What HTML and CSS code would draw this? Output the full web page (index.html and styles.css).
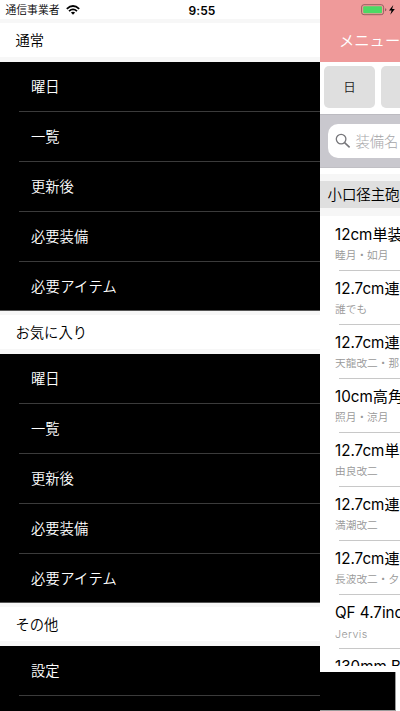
FILE: index.html
```html
<!DOCTYPE html>
<html lang="ja">
<head>
<meta charset="utf-8">
<title>メニュー</title>
<link rel="stylesheet" href="styles.css">
</head>
<body>
<div class="screen">
  <nav class="drawer">
    <div class="status">
      <span class="carrier">通信事業者</span>
      <svg class="wifi" width="14" height="10" viewBox="0 0 14 10"><g fill="none" stroke="#000" stroke-width="1.8"><path d="M.8 3.8Q7-1.7 13.2 3.8"/><path d="M3 6.1Q7 2.7 11 6.1"/></g><path d="M4.9 7.6Q7 6 9.1 7.6L7 9.8Z"/></svg>
      <span class="clock">9:55</span>
    </div>
    <h2 class="section first">通常</h2>
    <ul class="group">
      <li><span>曜日</span></li><li><span>一覧</span></li><li><span>更新後</span></li><li><span>必要装備</span></li><li><span class="wide">必要アイテム</span></li>
    </ul>
    <h2 class="section">お気に入り</h2>
    <ul class="group">
      <li><span>曜日</span></li><li><span>一覧</span></li><li><span>更新後</span></li><li><span>必要装備</span></li><li><span class="wide">必要アイテム</span></li>
    </ul>
    <h2 class="section">その他</h2>
    <ul class="group last"><li><span>設定</span></li><li></li></ul>
  </nav>
  <main class="content">
    <header class="topbar">
      <div class="power">
        <svg width="35" height="14" viewBox="0 0 35 14"><rect x=".6" y="1.7" width="22" height="10" rx="2.4" fill="none" stroke="#985f61" stroke-width="1"/><rect x="2.2" y="3.2" width="18.8" height="7" rx="1" fill="#4cd964"/><path d="M24 5.2q1.4.4 1.4 1.5T24 8.2z" fill="#985f61"/><path d="M32.3 1.9L28 7.6h2.6l-1.3 4.2 4.5-5.8h-2.7z"/></svg>
      </div>
      <div class="title">メニュー</div>
    </header>
    <div class="days"><div class="day">日</div><div class="day"></div></div>
    <div class="searchbar">
      <div class="field">
        <svg width="16" height="16" viewBox="0 0 16 16" fill="none" stroke="#77777b" stroke-width="1.3"><circle cx="6.1" cy="6.1" r="4.8"/><path d="M9.6 9.6L14.6 14.4" stroke-width="1.6"/></svg>
        <span>装備名</span>
      </div>
    </div>
    <div class="category"><div>小口径主砲</div></div>
    <div class="list">
      <div class="item"><b>12cm単装</b><small>睦月・如月</small></div>
      <div class="item"><b>12.7cm連装</b><small>誰でも</small></div>
      <div class="item"><b>12.7cm連装</b><small>天龍改二・那</small></div>
      <div class="item"><b>10cm高角</b><small>照月・涼月</small></div>
      <div class="item"><b>12.7cm単装</b><small>由良改二</small></div>
      <div class="item"><b>12.7cm連装</b><small>満潮改二</small></div>
      <div class="item"><b>12.7cm連装</b><small>長波改二・夕</small></div>
      <div class="item"><b>QF 4.7inch</b><small class="latin">Jervis</small></div>
      <div class="item"><b>130mm B</b></div>
    </div>
    <div class="banner"><div></div></div>
  </main>
</div>
</body>
</html>
```
FILE: styles.css
```css
* { box-sizing: border-box; margin: 0; padding: 0; }
body { font-family: Inter, "Noto Sans CJK JP", sans-serif; overflow: hidden; background: #fff; color: #000; }
.screen { display: grid; grid-template-columns: 320px 80px; width: 400px; height: 711px; overflow: hidden; }
.drawer { height: 711px; overflow: hidden; background: #000; }
.status { display: flex; align-items: center; height: 19px; padding-left: 5.5px; background: #fff; }
.carrier { width: 54.5px; padding-top: 2px; font-size: 10.8px; font-weight: 350; line-height: 19px; white-space: nowrap; }
.wifi { margin-left: 6px; }
.clock { margin: 1px 0 0 108.5px; font-size: 12px; font-weight: 600; line-height: 19px; letter-spacing: .1px; }
.section { height: 43px; padding-left: 15.5px; background: #fff; border-top: 4px solid #f7f7f7; border-bottom: 5px solid #f7f7f7; font-size: 14.3px; font-weight: 350; line-height: 36px; }
.group { list-style: none; height: 249px; background: #000; }
.group.last { height: 65px; }
.group li { height: 50px; padding-left: 19px; color: #fff; }
.group li span { display: block; height: 50px; border-bottom: 1px solid #3b3b3b; padding-left: 12px; font-size: 14.3px; font-weight: 350; line-height: 49px; }
.group li .wide { letter-spacing: .3px; }
.group:not(.last) li:last-child { height: 49px; border-bottom: 1px solid #555; }
.group:not(.last) li:last-child span { height: 48px; border-bottom: 0; }
.content { height: 711px; overflow: hidden; background: #fff; }
.topbar { height: 62px; background: #ef9a9a; }
.power { height: 20px; padding: 3px 0 0 41px; }
.power svg { display: block; }
.title { padding-left: 19px; font-size: 15.3px; font-weight: 350; line-height: 42px; color: #fff; white-space: nowrap; }
.days { display: flex; gap: 6px; height: 52px; padding: 4px 0 0 4px; }
.day { flex: 0 0 51px; height: 42px; border-radius: 5px; background: #dfdfdf; color: #222; text-align: center; font-size: 12.5px; font-weight: 350; line-height: 44px; }
.searchbar { height: 54px; padding: 8.5px 0 0 7.5px; background: #c9c8ce; border-top: 1px solid #bcbbc1; border-bottom: 1px solid #c0bfc4; }
.field { display: flex; align-items: center; width: 100px; height: 34.5px; padding-left: 7px; border-radius: 10px; background: #fff; color: #a6a6a9; font-size: 14.3px; font-weight: 300; }
.field span { margin: 0 0 0 5px; }
.category { height: 48px; padding-top: 6px; }
.category div { height: 42px; padding-left: 7.5px; border-top: 7px solid #f6f6f6; border-bottom: 8px solid #f6f6f6; background: #dfdfdf; font-size: 14.4px; line-height: 28px; font-weight: 350; white-space: nowrap; }
.list { height: 450px; padding-top: 1px; overflow: hidden; }
.item { display: grid; grid-template-rows: 34px 20px; height: 54px; padding-left: 15px; white-space: nowrap; background: linear-gradient(#c8c8c8, #c8c8c8) 19px 100% / 100px 1px no-repeat; }
.item b { font-size: 15.2px; font-weight: 400; line-height: 35px; }
.item small { font-size: 10.7px; font-weight: 350; line-height: 10px; color: #989898; }
.item .latin { letter-spacing: .4px; line-height: 11px; }
.banner { height: 45px; padding-top: 6px; }
.banner div { width: 76px; height: 39px; background: #000; border-right: 1px solid #9b9b9b; border-bottom: 1px solid #9b9b9b; }
```
